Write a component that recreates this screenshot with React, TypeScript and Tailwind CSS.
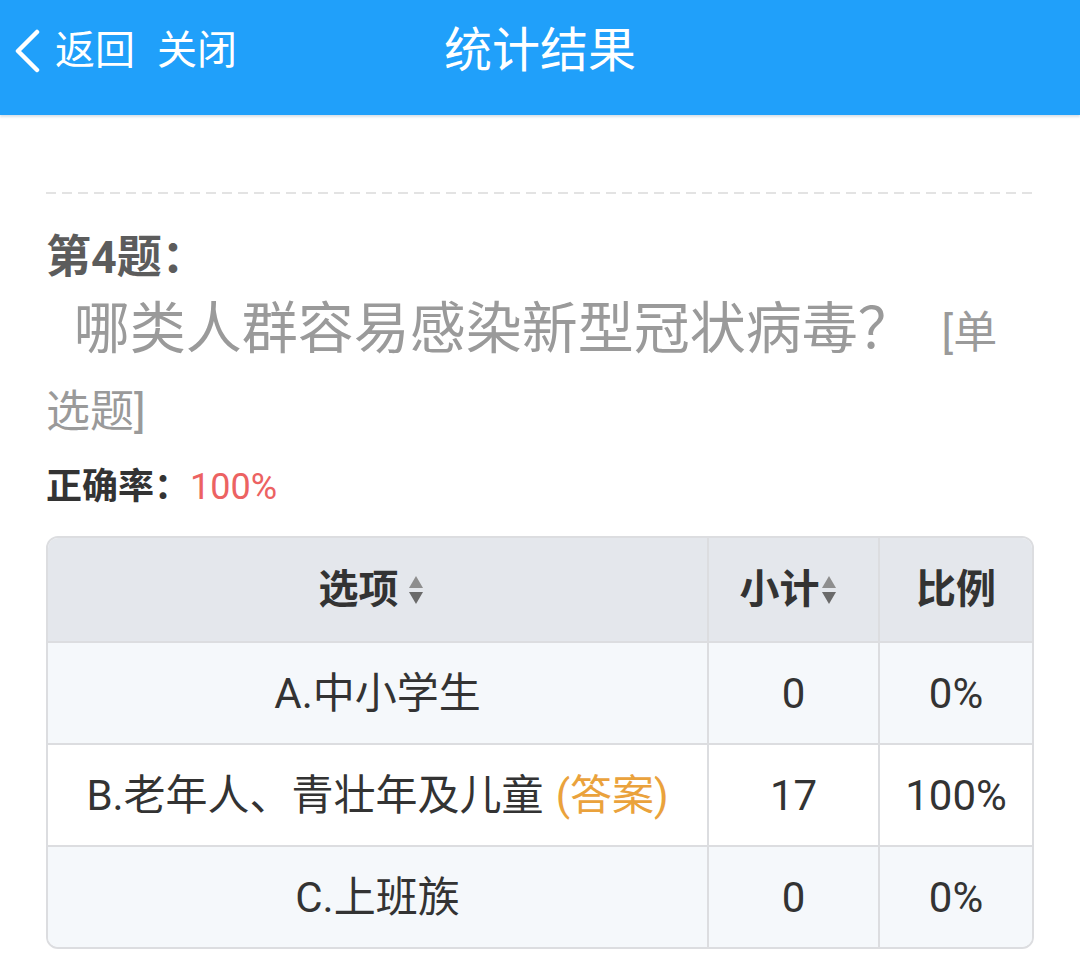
import { useState } from 'react';

interface Row {
  label: string;
  answer?: boolean;
  count: number;
  ratio: string;
}

const rows: Row[] = [
  { label: 'A.中小学生', count: 0, ratio: '0%' },
  { label: 'B.老年人、青壮年及儿童', answer: true, count: 17, ratio: '100%' },
  { label: 'C.上班族', count: 0, ratio: '0%' },
];

function SortIcon() {
  return (
    <svg width="18" height="38" viewBox="0 0 18 38" className="inline-block">
      <path d="M9 5 L16 17 L2 17 Z" fill="#8e8e8e" />
      <path d="M2 21 L16 21 L9 33 Z" fill="#6a6a6a" />
    </svg>
  );
}

export default function App() {
  const [rowsData] = useState<Row[]>(rows);

  return (
    <div
      className="w-[1080px] h-[956px] bg-white overflow-hidden"
      style={{ fontFamily: 'Roboto, "Noto Sans CJK SC", sans-serif' }}
    >
      {/* top bar */}
      <div className="relative h-[115px] bg-[#20a0fa] flex items-center pb-[14px] shadow-[0_2px_2px_rgba(150,170,190,0.35)]">
        <div className="flex items-center pl-[12px] text-white text-[40px] leading-none">
          <svg width="30" height="44" viewBox="0 0 30 44" className="mr-[13px]">
            <path d="M25 3 L6 22 L25 41" stroke="white" strokeWidth="4.5" fill="none" strokeLinecap="round" strokeLinejoin="round" />
          </svg>
          <span>返回</span>
          <span className="ml-[22px]">关闭</span>
        </div>
        <div className="absolute left-0 right-0 top-0 h-[101px] flex items-center justify-center text-white text-[48px] leading-none pointer-events-none">
          统计结果
        </div>
      </div>

      <div className="px-[46px]">
        <div className="mt-[77px] h-[2px] bg-[repeating-linear-gradient(90deg,#e3e3e3_0_10px,transparent_10px_16px)]" />

        <div className="mt-[38px] text-[45px] leading-[52px] font-bold text-[#5c5c5c]">第4题：</div>

        <div className="mt-[8px] text-[56px] leading-[75px] text-[#9a9a9a] whitespace-pre-wrap">
          {'  哪类人群容易感染新型冠状病毒？  '}
          <span className="text-[44px]">[单选题]</span>
        </div>

        <div className="mt-[14px] text-[36px] leading-[46px] flex items-center">
          <span className="font-bold text-[#333]">正确率：</span>
          <span className="text-[#ec6262]">100%</span>
        </div>

        <div className="mt-[26px] border-2 border-[#dcdde0] rounded-[12px] overflow-hidden">
          <div className="flex h-[103px] bg-[#e4e7ec] text-[40px] font-bold text-[#333]">
            <div className="w-[661px] flex items-center justify-center gap-[8px] pr-[12px] border-r-2 border-[#dcdde0]">
              选项<SortIcon />
            </div>
            <div className="w-[171px] flex items-center justify-center pr-[10px] border-r-2 border-[#dcdde0]">
              小计<SortIcon />
            </div>
            <div className="flex-1 flex items-center justify-center">比例</div>
          </div>
          {rowsData.map((r, i) => (
            <div
              key={i}
              className={
                'flex h-[102px] text-[42px] text-[#333] border-t-2 border-[#dcdde0] ' +
                (i % 2 === 0 ? 'bg-[#f5f8fb]' : 'bg-white')
              }
            >
              <div className="w-[661px] flex items-center justify-center border-r-2 border-[#dcdde0]">
                {r.label}
                {r.answer && <span className="ml-[12px] text-[#eaa23c]">(答案)</span>}
              </div>
              <div className="w-[171px] flex items-center justify-center border-r-2 border-[#dcdde0]">{r.count}</div>
              <div className="flex-1 flex items-center justify-center">{r.ratio}</div>
            </div>
          ))}
        </div>
      </div>
    </div>
  );
}
